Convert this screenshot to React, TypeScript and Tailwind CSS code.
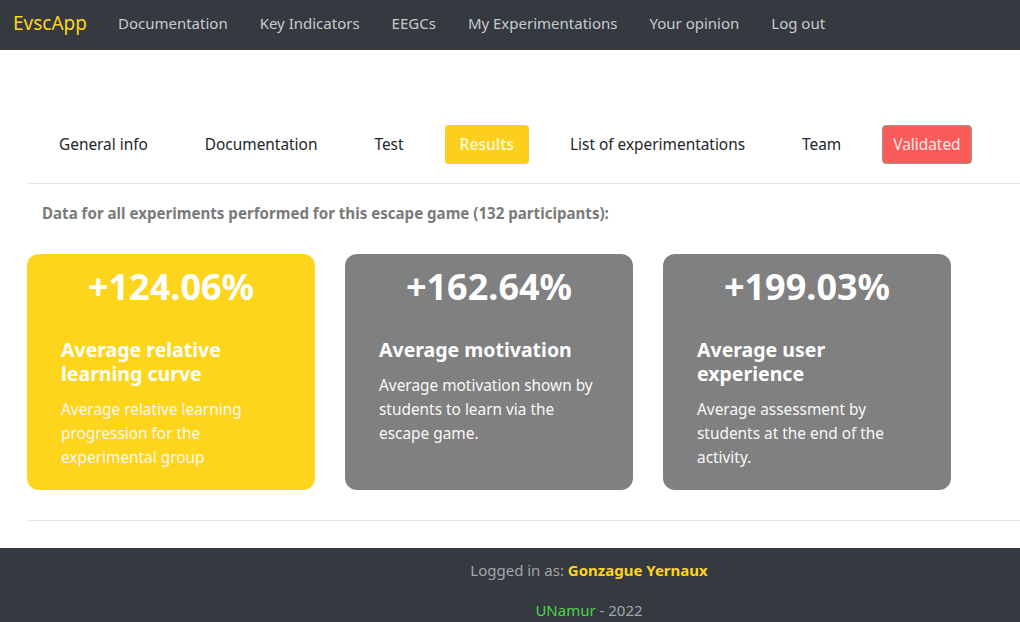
import React from "react";

const navLinks = ["Documentation", "Key Indicators", "EEGCs", "My Experimentations", "Your opinion", "Log out"];
const tabs = ["General info", "Documentation", "Test", "Results", "List of experimentations", "Team"];

const cards = [
  {
    value: "+124.06%",
    title: "Average relative learning curve",
    text: "Average relative learning progression for the experimental group",
    bg: "bg-[#fdd51c]",
  },
  {
    value: "+162.64%",
    title: "Average motivation",
    text: "Average motivation shown by students to learn via the escape game.",
    bg: "bg-[#808080]",
  },
  {
    value: "+199.03%",
    title: "Average user experience",
    text: "Average assessment by students at the end of the activity.",
    bg: "bg-[#808080]",
  },
];

export default function App() {
  return (
    <div className="min-h-[622px] bg-white font-['Noto_Sans',sans-serif] text-[#212529]">
      {/* navbar */}
      <nav className="flex h-[50px] items-center bg-[#343a40] pb-[3px] pl-[13px]">
        <span className="mr-[31px] text-[19px] text-[#fdd51c]">EvscApp</span>
        <div className="flex gap-[32px] text-[15px] text-[#c9cacc]">
          {navLinks.map((l) => (
            <span key={l}>{l}</span>
          ))}
        </div>
      </nav>

      <main className="pl-[27px] pt-[75px]">
        <div className="flex items-center gap-[25px] pl-[16px] text-[15.4px]">
          {tabs.map((t) =>
            t === "Results" ? (
              <span key={t} className="rounded-[4px] bg-[#fbcf1c] px-[15px] py-[8px] font-semibold text-[#fdf6d0]">
                {t}
              </span>
            ) : (
              <span key={t} className="px-4 py-[8px]">
                {t}
              </span>
            )
          )}
          <span className="rounded-[4px] border border-[#9a9a80] bg-[#fa5a5a] px-[10px] py-[7px] text-[#fde8e8]">
            Validated
          </span>
        </div>

        <div className="mt-[19px] border-t border-[#e3e3e3]" />

        <p className="mt-[18px] pl-[15px] text-[15.1px] font-bold text-[#7a7a7a]">
          Data for all experiments performed for this escape game (132 participants):
        </p>

        <div className="mt-[29px] flex gap-[30px]">
          {cards.map((c) => (
            <div key={c.value} className={`h-[236px] w-[288px] rounded-[12px] ${c.bg} px-[34px] pt-[10px] text-white`}>
              <div className="text-center text-[36px] font-bold leading-[46px]">{c.value}</div>
              <div className="mt-[28px] text-[19.5px] font-bold leading-[24px]">{c.title}</div>
              <div className="mt-[12px] text-[15.4px] leading-[24px] text-[#f8f8f8]">{c.text}</div>
            </div>
          ))}
        </div>

        <div className="mt-[30px] border-t border-[#e3e3e3]" />
      </main>

      <footer className="mt-[27px] flex h-[74px] flex-col items-center bg-[#343a40] pt-[11px] text-[15px] text-[#a3a6a9]">
        <div className="pl-[158px]">
          Logged in as: <span className="font-bold text-[#fdd51c]">Gonzague Yernaux</span>
        </div>
        <div className="mt-[18px] pl-[158px]">
          <span className="text-[#4ed44e]">UNamur</span> - 2022
        </div>
      </footer>
    </div>
  );
}
